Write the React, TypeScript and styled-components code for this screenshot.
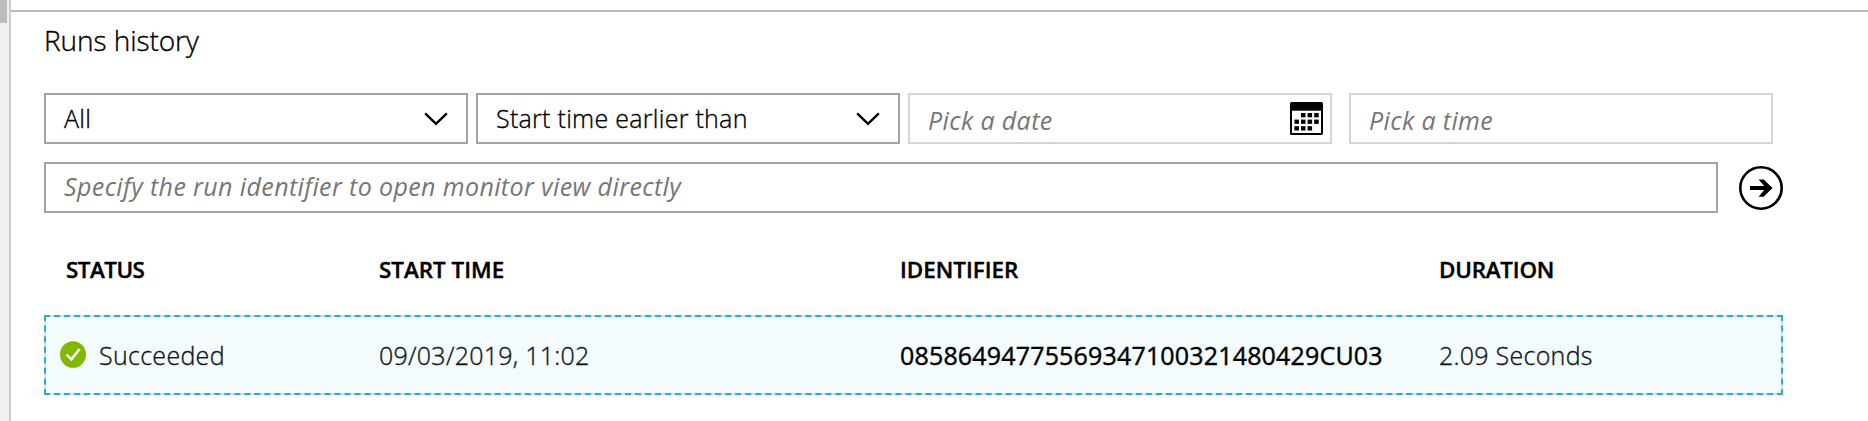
import React from 'react';
import styled, { createGlobalStyle } from 'styled-components';

const GlobalStyle = createGlobalStyle`
  * { box-sizing: border-box; }
  body {
    margin: 0;
    background: #fff;
    color: #000;
    font-family: 'Open Sans', 'Noto Sans', sans-serif;
    overflow: hidden;
  }
`;

const Page = styled.div`
  display: flex;
  height: 421px;
`;

const ScrollRail = styled.div`
  flex: none;
  width: 9px;
  background: #f0f0f0;
`;

const ScrollThumb = styled.div`
  width: 7px;
  height: 23px;
  background: #bcbcbc;
`;

const Main = styled.main`
  flex: 1;
  border-left: 2px solid #cdcdcd;
  padding-top: 10px;
`;

const Panel = styled.section`
  border-top: 2px solid #bababa;
  padding: 9px 85px 0 33px;
`;

const Title = styled.h2`
  margin: 0 0 34px;
  font-size: 28px;
  font-weight: 300;
  line-height: 38px;
  letter-spacing: -0.06px;
  -webkit-text-stroke: 0.35px #000;
`;

const Filters = styled.div`
  display: flex;
  gap: 8px;
`;

const Field = styled.div<{ $tone?: 'strong' | 'soft'; $width?: number }>`
  display: flex;
  align-items: center;
  justify-content: space-between;
  width: ${(p) => p.$width ?? 424}px;
  height: 51px;
  padding: 0 18px;
  border: 2px solid ${(p) => (p.$tone === 'soft' ? '#d5d5d5' : '#a3a3a3')};
`;

const DateField = styled(Field)`
  padding: 0 7px 0 18px;
  margin-right: 9px;
`;

const Value = styled.span`
  font-size: 25px;
  font-weight: 300;
  line-height: 34px;
  letter-spacing: 0.28px;
  white-space: nowrap;
  -webkit-text-stroke: 0.35px #000;
`;

const SelectValue = styled(Value)`
  padding-bottom: 2px;
`;

const Placeholder = styled.span<{ $shift?: number }>`
  font-size: 25px;
  font-style: italic;
  line-height: 34px;
  letter-spacing: 0.38px;
  color: #767676;
  white-space: nowrap;
  padding-top: ${(p) => Math.max(p.$shift ?? 0, 0)}px;
  padding-bottom: ${(p) => Math.max(-(p.$shift ?? 0), 0)}px;
`;

const IdentifierBar = styled.div`
  display: flex;
  align-items: center;
  gap: 21px;
  margin-top: 18px;
`;

const GoButton = styled.button`
  display: flex;
  width: 44px;
  height: 44px;
  padding: 0;
  border: 0;
  background: none;
`;

const Columns = styled.div`
  display: grid;
  grid-template-columns: 313px 521px 539px 1fr;
  align-items: center;
`;

const HeaderRow = styled(Columns)`
  height: 40px;
  margin-top: 37px;
  padding-left: 22px;
`;

const HeaderCell = styled.span<{ $spacing: number }>`
  font-size: 22.4px;
  font-weight: 600;
  line-height: 30px;
  letter-spacing: ${(p) => p.$spacing}px;
  white-space: nowrap;
  -webkit-text-stroke: 0.4px #000;
`;

const RunRow = styled(Columns)`
  width: 1739px;
  height: 80px;
  margin-top: 25px;
  padding-left: 20px;
  border: 2px dashed #21b0cf;
  background: linear-gradient(#f3fbfd, #f3fbfd) padding-box, #e2dbe6 border-box;
`;

const StatusCell = styled.div`
  display: flex;
  align-items: center;
  gap: 13px;
  margin-left: -6px;
`;

const CellText = styled(Value)<{ $spacing: number }>`
  color: #101418;
  letter-spacing: ${(p) => p.$spacing}px;
  -webkit-text-stroke-color: #101418;
`;

const RunId = styled.span`
  font-size: 25px;
  font-weight: 400;
  line-height: 34px;
  letter-spacing: 0.17px;
  -webkit-text-stroke: 0.4px #000;
`;

const StatusIcon = styled.svg`
  flex: none;
  display: block;
  margin-bottom: 2px;
`;

const Chevron = () => (
  <svg width="24" height="14" viewBox="0 0 24 14" fill="none">
    <path d="M1.2 1.3 12 11.8 22.8 1.3" stroke="#000" strokeWidth="2.4" />
  </svg>
);

const daySquares = [
  [1, 0], [2, 0], [3, 0],
  [0, 1], [1, 1], [2, 1], [3, 1],
  [0, 2], [1, 2], [2, 2],
];

const Calendar = () => (
  <svg width="33" height="33" viewBox="0 0 33 33">
    <rect width="33" height="33" rx="1.5" fill="#000" />
    <rect x="2" y="8.7" width="29" height="22.3" fill="#fff" />
    {daySquares.map(([c, r]) => (
      <rect key={`${c}-${r}`} x={4.4 + c * 6.6} y={11 + r * 6.6} width="4.5" height="4.3" fill="#000" />
    ))}
  </svg>
);

const GoArrow = () => (
  <svg width="44" height="44" viewBox="0 0 44 44">
    <circle cx="22" cy="22" r="20.7" fill="none" stroke="#000" strokeWidth="2.6" />
    <path d="M11 20.1H25.2L19.6 13.4H24.6L33.6 22.1 24.6 30.8H19.6L25.2 24.1H11Z" fill="#000" />
  </svg>
);

const Succeeded = () => (
  <StatusIcon width="26" height="27" viewBox="0 0 26 27">
    <ellipse cx="13" cy="13.5" rx="13" ry="13.3" fill="#7fba00" />
    <path d="M6.6 13.6 11.4 18.4 19.6 8" fill="none" stroke="#fff" strokeWidth="2.6" />
  </StatusIcon>
);

export default function App() {
  return (
    <>
      <GlobalStyle />
      <Page>
        <ScrollRail>
          <ScrollThumb />
        </ScrollRail>
        <Main>
          <Panel>
            <Title>Runs history</Title>
            <Filters>
              <Field>
                <SelectValue>All</SelectValue>
                <Chevron />
              </Field>
              <Field>
                <SelectValue>Start time earlier than</SelectValue>
                <Chevron />
              </Field>
              <DateField $tone="soft">
                <Placeholder $shift={2}>Pick a date</Placeholder>
                <Calendar />
              </DateField>
              <Field $tone="soft">
                <Placeholder $shift={2}>Pick a time</Placeholder>
              </Field>
            </Filters>
            <IdentifierBar>
              <Field $width={1674}>
                <Placeholder $shift={-3}>Specify the run identifier to open monitor view directly</Placeholder>
              </Field>
              <GoButton aria-label="Open run">
                <GoArrow />
              </GoButton>
            </IdentifierBar>
            <HeaderRow>
              <HeaderCell $spacing={-0.5}>STATUS</HeaderCell>
              <HeaderCell $spacing={0}>START TIME</HeaderCell>
              <HeaderCell $spacing={0}>IDENTIFIER</HeaderCell>
              <HeaderCell $spacing={-0.2}>DURATION</HeaderCell>
            </HeaderRow>
            <RunRow>
              <StatusCell>
                <Succeeded />
                <CellText $spacing={0.3}>Succeeded</CellText>
              </StatusCell>
              <CellText $spacing={0.26}>09/03/2019, 11:02</CellText>
              <RunId>08586494775569347100321480429CU03</RunId>
              <CellText $spacing={0.27}>2.09 Seconds</CellText>
            </RunRow>
          </Panel>
        </Main>
      </Page>
    </>
  );
}
